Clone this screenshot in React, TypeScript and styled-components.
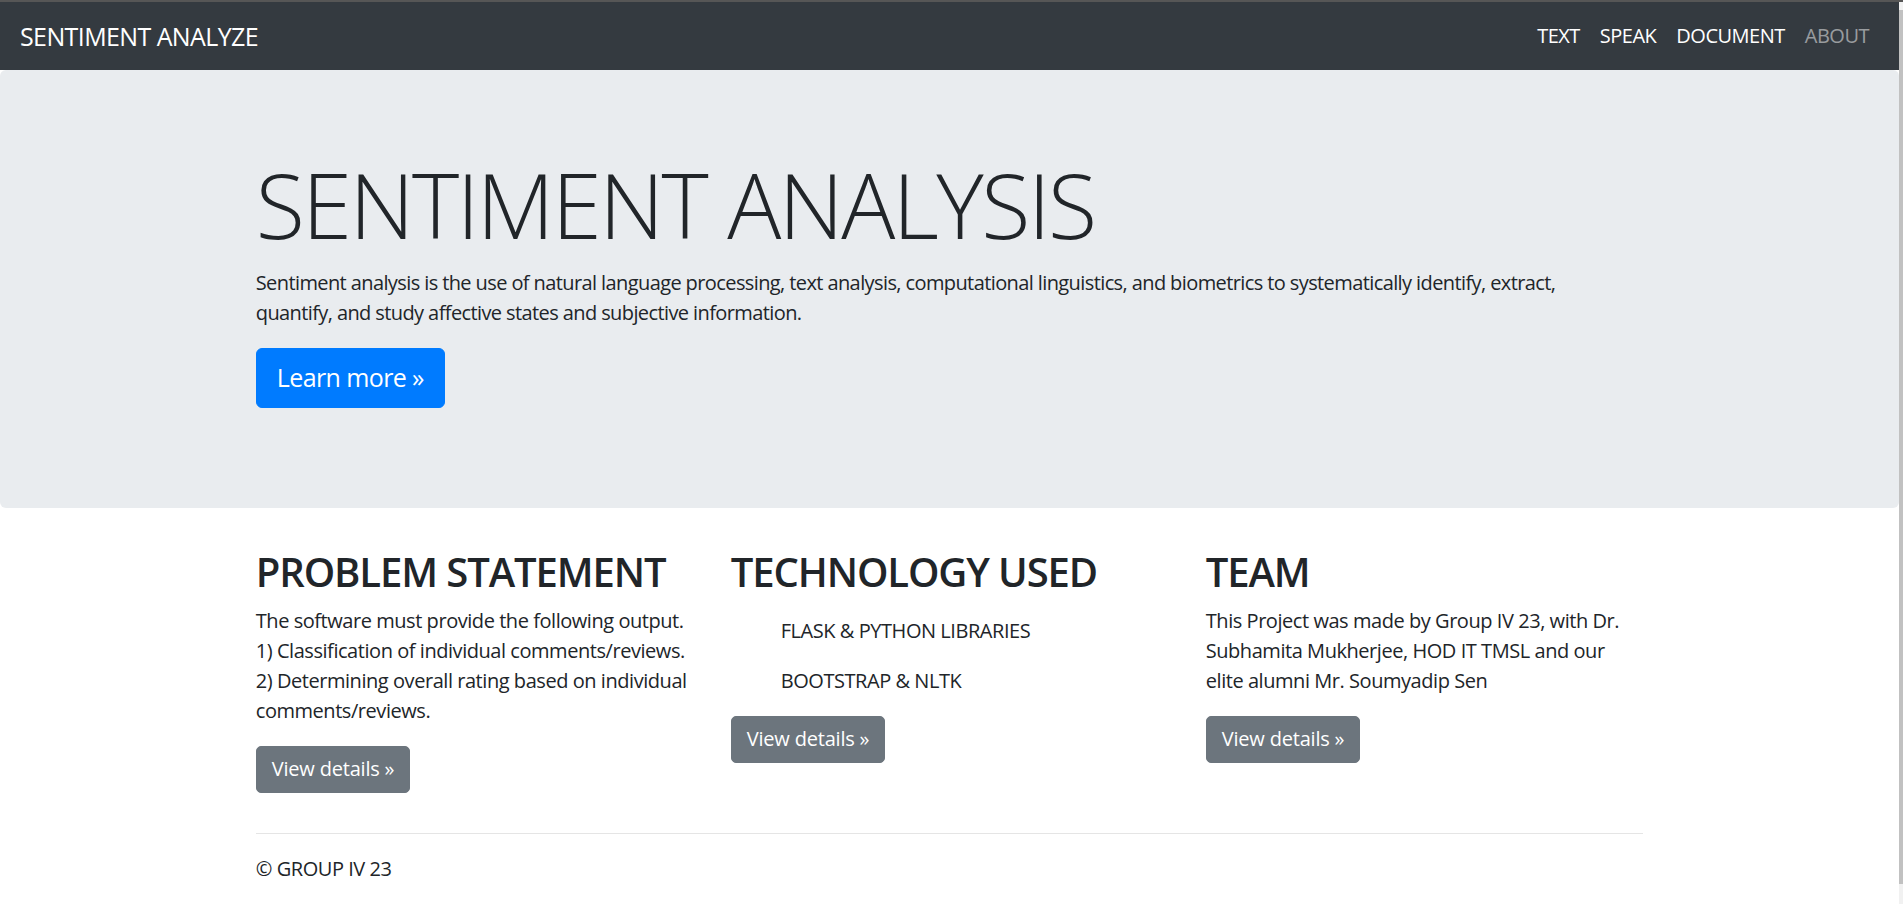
import styled, { createGlobalStyle } from "styled-components";
import type { FC } from "react";

const GlobalStyle = createGlobalStyle`
    html, body {
        margin: 0;
        padding: 0;
        background: #fff;
    }
    body {
        font-family: "Open Sans", "Noto Sans", sans-serif;
        font-size: 20px;
        line-height: 30px;
        color: #212529;
    }
    * {
        box-sizing: border-box;
    }
`;

const Shell = styled.div`
    display: flex;
    min-height: 904px;
    border-top: 2px solid #565656;
`;

const Page = styled.div`
    flex: 1;
    min-width: 0;
`;

const ScrollTrack = styled.div`
    width: 4px;
    background: #f1f1f1;
    padding: 8px 0 20px;
    display: flex;
`;

const ScrollThumb = styled.div`
    flex: 1;
    background: #c1c1c1;
`;

const Navbar = styled.nav`
    display: flex;
    align-items: center;
    justify-content: space-between;
    height: 68px;
    padding: 0 20px;
    background: #343a40;
`;

const Brand = styled.a`
    font-size: 25px;
    line-height: 37px;
    color: #fff;
    text-decoration: none;
    letter-spacing: -0.6px;
`;

const NavList = styled.ul`
    display: flex;
    margin: 0;
    padding: 0;
    list-style: none;
`;

const NavLink = styled.a<{ muted?: boolean }>`
    display: block;
    padding: 0 10px;
    color: ${({ muted }) => (muted ? "rgba(255,255,255,.5)" : "#fff")};
    text-decoration: none;
    letter-spacing: -0.5px;
`;

const Jumbotron = styled.section`
    background: #e9ecef;
    border-radius: 6px;
    padding: 80px 0;
    margin-bottom: 40px;
`;

const Container = styled.div`
    width: 1425px;
    margin: 0 auto;
    padding: 0 18.75px;
`;

const Display = styled.h1`
    margin: 0 0 10px;
    font-size: 90px;
    font-weight: 300;
    line-height: 108px;
    letter-spacing: -2.5px;
`;

const Lead = styled.p`
    margin: 0 0 20px;
    letter-spacing: -0.6px;
`;

const Button = styled.a<{ variant: "primary" | "secondary"; size?: "lg" }>`
    display: inline-block;
    color: #fff;
    text-decoration: none;
    border-radius: ${({ size }) => (size === "lg" ? "6px" : "5px")};
    border: 1px solid
        ${({ variant }) => (variant === "primary" ? "#007bff" : "#6c757d")};
    background: ${({ variant }) =>
        variant === "primary" ? "#007bff" : "#6c757d"};
    padding: ${({ size }) => (size === "lg" ? "10px 20px" : "7.5px 15px")};
    font-size: ${({ size }) => (size === "lg" ? "25px" : "20px")};
    line-height: ${({ size }) => (size === "lg" ? "37.5px" : "30px")};
    letter-spacing: ${({ size }) => (size === "lg" ? "-0.6px" : "-0.2px")};
`;

const Row = styled.div`
    display: grid;
    grid-template-columns: repeat(3, 1fr);
    margin: 0 -18.75px;
`;

const Column = styled.div`
    padding: 0 18.75px;
`;

const Heading = styled.h2`
    margin: 0 0 10px;
    font-size: 40px;
    font-weight: 600;
    line-height: 48px;
    letter-spacing: -1.1px;
`;

const Text = styled.p`
    margin: 0 0 20px;
    letter-spacing: -0.45px;
`;

const TechList = styled.ul`
    list-style: none;
    margin: 0 0 20px;
    padding: 10px 0 0 50px;
    display: flex;
    flex-direction: column;
    gap: 20px;
    letter-spacing: -0.45px;
`;

const Rule = styled.hr`
    margin: 20px 0;
    border: 0;
    border-top: 1px solid rgba(0, 0, 0, 0.1);
`;

const Footer = styled.footer`
    p {
        margin: 0 0 20px;
        letter-spacing: -0.45px;
    }
`;

const columns = [
    {
        title: "PROBLEM STATEMENT",
        lines: [
            "The software must provide the following output.",
            "1) Classification of individual comments/reviews.",
            "2) Determining overall rating based on individual",
            "comments/reviews.",
        ],
    },
    {
        title: "TECHNOLOGY USED",
        items: ["FLASK & PYTHON LIBRARIES", "BOOTSTRAP & NLTK"],
    },
    {
        title: "TEAM",
        lines: [
            "This Project was made by Group IV 23, with Dr.",
            "Subhamita Mukherjee, HOD IT TMSL and our",
            "elite alumni Mr. Soumyadip Sen",
        ],
    },
];

const App: FC = () => {
    return (
        <>
            <GlobalStyle />
            <Shell>
                <Page>
                    <Navbar>
                        <Brand href="#">SENTIMENT ANALYZE</Brand>
                        <NavList>
                            <li><NavLink href="#">TEXT</NavLink></li>
                            <li><NavLink href="#">SPEAK</NavLink></li>
                            <li><NavLink href="#">DOCUMENT</NavLink></li>
                            <li><NavLink href="#" muted>ABOUT</NavLink></li>
                        </NavList>
                    </Navbar>

                    <Jumbotron>
                        <Container>
                            <Display>SENTIMENT ANALYSIS</Display>
                            <Lead>
                                Sentiment analysis is the use of natural language processing, text analysis, computational linguistics, and biometrics to systematically identify, extract,
                                <br />
                                quantify, and study affective states and subjective information.
                            </Lead>
                            <Lead>
                                <Button href="#" variant="primary" size="lg">
                                    Learn more »
                                </Button>
                            </Lead>
                        </Container>
                    </Jumbotron>

                    <Container>
                        <Row>
                            {columns.map((col) => (
                                <Column key={col.title}>
                                    <Heading>{col.title}</Heading>
                                    {col.lines && (
                                        <Text>
                                            {col.lines.map((line, i) => (
                                                <span key={i}>
                                                    {line}
                                                    {i < col.lines.length - 1 && <br />}
                                                </span>
                                            ))}
                                        </Text>
                                    )}
                                    {col.items && (
                                        <TechList>
                                            {col.items.map((item) => (
                                                <li key={item}>{item}</li>
                                            ))}
                                        </TechList>
                                    )}
                                    <Text>
                                        <Button href="#" variant="secondary">
                                            View details »
                                        </Button>
                                    </Text>
                                </Column>
                            ))}
                        </Row>
                        <Rule />
                        <Footer>
                            <p>© GROUP IV 23</p>
                        </Footer>
                    </Container>
                </Page>
                <ScrollTrack>
                    <ScrollThumb />
                </ScrollTrack>
            </Shell>
        </>
    );
};

export default App;
